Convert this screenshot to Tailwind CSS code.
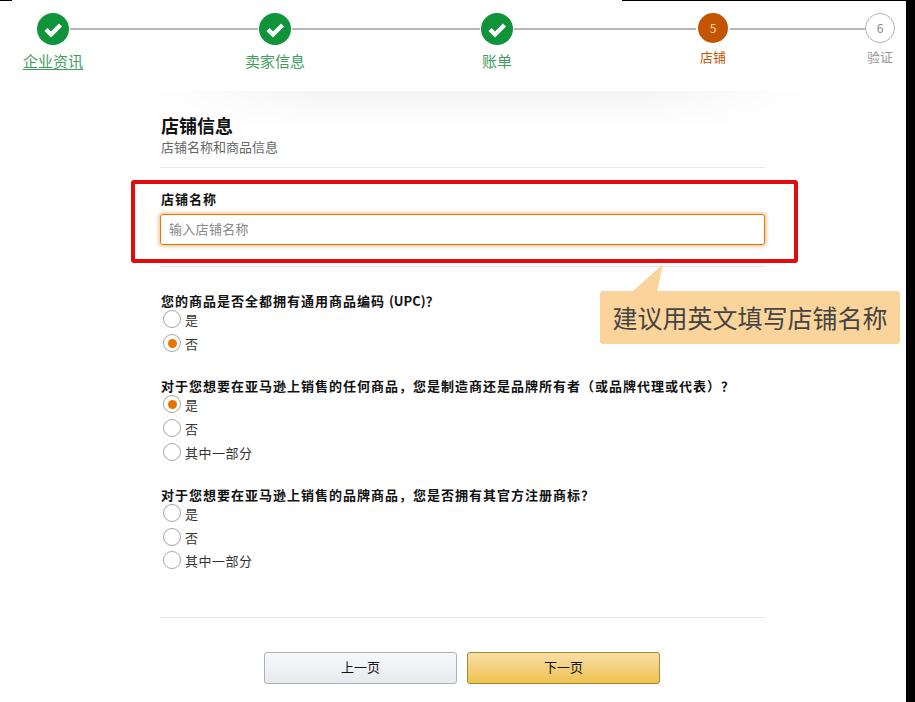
<!DOCTYPE html>
<html lang="zh">
<head>
<meta charset="utf-8">
<script src="https://cdn.jsdelivr.net/npm/@tailwindcss/browser@4"></script>
</head>
<body class="bg-black overflow-hidden">
<div class="relative w-[906px] h-[702px] bg-white overflow-hidden font-['Noto_Sans_CJK_SC','Noto_Sans',sans-serif] text-[13px] text-[#333]">
  <div class="flex h-px">
    <div class="w-[12px] bg-black"></div>
    <div class="w-[610px] bg-white"></div>
    <div class="flex-1 bg-black"></div>
  </div>

  <!-- stepper -->
  <div class="relative h-[90px] pl-[13px] pt-[11px] flex items-start">
    <div class="absolute left-[66px] top-[27px] w-[802px] h-[2px] bg-[#b8b8b8]"></div>
    <div class="relative shrink-0 w-[80px] flex flex-col items-center">
      <svg class="w-[34px] h-[34px]" viewBox="0 0 34 34"><circle cx="17" cy="17" r="17" fill="#fff"/><circle cx="17" cy="17" r="16" fill="#0f9439"/><path d="M10 17.5l5 5 9.5-9.5" fill="none" stroke="#fff" stroke-width="4.4"/></svg>
      <span class="mt-[5px] text-[15px] leading-[20px] text-[#3f9e5c] underline underline-offset-2">企业资讯</span>
    </div>
    <div class="relative shrink-0 w-[80px] ml-[142px] flex flex-col items-center">
      <svg class="w-[34px] h-[34px]" viewBox="0 0 34 34"><circle cx="17" cy="17" r="17" fill="#fff"/><circle cx="17" cy="17" r="16" fill="#0f9439"/><path d="M10 17.5l5 5 9.5-9.5" fill="none" stroke="#fff" stroke-width="4.4"/></svg>
      <span class="mt-[5px] text-[15px] leading-[20px] text-[#3f9e5c]">卖家信息</span>
    </div>
    <div class="relative shrink-0 w-[80px] ml-[142px] flex flex-col items-center">
      <svg class="w-[34px] h-[34px]" viewBox="0 0 34 34"><circle cx="17" cy="17" r="17" fill="#fff"/><circle cx="17" cy="17" r="16" fill="#0f9439"/><path d="M10 17.5l5 5 9.5-9.5" fill="none" stroke="#fff" stroke-width="4.4"/></svg>
      <span class="mt-[5px] text-[15px] leading-[20px] text-[#3f9e5c]">账单</span>
    </div>
    <div class="relative shrink-0 w-[80px] ml-[136px] flex flex-col items-center -mt-[1px]">
      <div class="w-[34px] h-[34px] rounded-full bg-[#c45500] border-2 border-white text-[#f5d9b8] text-[12px] leading-[30px] text-center">5</div>
      <span class="mt-[3px] text-[13px] leading-[18px] text-[#c45500]">店铺</span>
    </div>
    <div class="relative shrink-0 w-[80px] ml-[87px] flex flex-col items-center pt-[1px]">
      <div class="w-[30px] h-[30px] rounded-full bg-white border border-[#b4b4b4] text-[#888] text-[12px] leading-[28px] text-center">6</div>
      <span class="mt-[5px] text-[13px] leading-[18px] text-[#999]">验证</span>
    </div>
  </div>

  <div class="ml-[150px] mr-[96px] h-[36px] -mb-[36px] bg-gradient-to-b from-[#f5f5f5] to-white [mask-image:linear-gradient(to_right,transparent,black_25%,black_75%,transparent)]"></div>

  <main class="relative ml-[160px] w-[605px]">
    <section class="pt-[24px] pb-[11px] border-b border-[#e7e7e7]">
      <h1 class="text-[18px] leading-[20px] font-bold text-[#111] pl-[1px]">店铺信息</h1>
      <p class="text-[13px] leading-[18px] text-[#666] mt-[3px] pl-[1px]">店铺名称和商品信息</p>
    </section>
    <section class="pt-[22px] pb-[21px] border-b border-[#e7e7e7]">
      <label class="block text-[13px] leading-[18px] font-bold text-[#111] tracking-[1px] pl-[1px]">店铺名称</label>
      <div class="mt-[6px] h-[31px] rounded-[3px] border border-[#e77600] shadow-[0_0_3px_2px_rgba(228,121,17,0.35)] pl-[8px] text-[13px] leading-[28px] text-[#888] tracking-[0.3px]">输入店铺名称</div>
    </section>

    <section class="pt-[25px]">
      <p class="h-[17px] pl-[1px] leading-[17px] font-bold text-[#111] tracking-[1px]">您的商品是否全都拥有通用商品编码 <span class="tracking-normal">(UPC)</span>？</p>
      <div class="flex flex-col gap-[4px]">
        <div class="h-[20px] flex items-center"><span class="ml-[3px] w-[18px] h-[18px] rounded-full border border-[#a6a6a6] bg-white"></span><span class="ml-[4px] pt-[2px]">是</span></div>
        <div class="h-[20px] flex items-center"><span class="ml-[3px] w-[18px] h-[18px] rounded-full border border-[#a6a6a6] bg-white flex items-center justify-center"><span class="w-[9px] h-[9px] rounded-full bg-[#e77600]"></span></span><span class="ml-[4px] pt-[2px]">否</span></div>
      </div>
    </section>
    <section class="pt-[24px]">
      <p class="h-[17px] pl-[1px] leading-[17px] font-bold text-[#111] tracking-[1px] whitespace-nowrap">对于您想要在亚马逊上销售的任何商品，您是制造商还是品牌所有者（或品牌代理或代表）？</p>
      <div class="flex flex-col gap-[4px]">
        <div class="h-[20px] flex items-center"><span class="ml-[3px] w-[18px] h-[18px] rounded-full border border-[#a6a6a6] bg-white flex items-center justify-center"><span class="w-[9px] h-[9px] rounded-full bg-[#e77600]"></span></span><span class="ml-[4px] pt-[2px]">是</span></div>
        <div class="h-[20px] flex items-center"><span class="ml-[3px] w-[18px] h-[18px] rounded-full border border-[#a6a6a6] bg-white"></span><span class="ml-[4px] pt-[2px]">否</span></div>
        <div class="h-[20px] flex items-center"><span class="ml-[3px] w-[18px] h-[18px] rounded-full border border-[#a6a6a6] bg-white"></span><span class="ml-[4px] pt-[2px] tracking-[0.5px]">其中一部分</span></div>
      </div>
    </section>
    <section class="pt-[24px]">
      <p class="h-[17px] pl-[1px] leading-[17px] font-bold text-[#111] tracking-[1px]">对于您想要在亚马逊上销售的品牌商品，您是否拥有其官方注册商标？</p>
      <div class="flex flex-col gap-[3.5px]">
        <div class="h-[20px] flex items-center"><span class="ml-[3px] w-[18px] h-[18px] rounded-full border border-[#a6a6a6] bg-white"></span><span class="ml-[4px] pt-[2px]">是</span></div>
        <div class="h-[20px] flex items-center"><span class="ml-[3px] w-[18px] h-[18px] rounded-full border border-[#a6a6a6] bg-white"></span><span class="ml-[4px] pt-[2px]">否</span></div>
        <div class="h-[20px] flex items-center"><span class="ml-[3px] w-[18px] h-[18px] rounded-full border border-[#a6a6a6] bg-white"></span><span class="ml-[4px] pt-[2px] tracking-[0.5px]">其中一部分</span></div>
      </div>
    </section>

    <div class="mt-[47px] border-t border-[#e7e7e7] pt-[34px] flex gap-[10px] pl-[104px]">
      <button class="w-[193px] h-[32px] rounded-[3px] border border-[#adb1b8] bg-gradient-to-b from-[#f7f8fa] to-[#e7e9ec] text-[13px] leading-[28px] text-[#111] pb-[2px]">上一页</button>
      <button class="w-[193px] h-[32px] rounded-[3px] border border-[#a88734] bg-gradient-to-b from-[#f7dfa5] to-[#f0c14b] text-[13px] leading-[28px] text-[#111] pb-[2px]">下一页</button>
    </div>
  </main>

  <!-- annotations -->
  <div class="absolute left-[131px] top-[180px] w-[667px] h-[83px] border-4 border-[#e30c0c] rounded-[3px]"></div>
  <svg class="absolute left-[630px] top-[263px] w-[36px] h-[30px]" viewBox="0 0 36 30"><polygon points="2,29 33,1 27,29" fill="#fbd49b"/></svg>
  <div class="absolute left-[600px] top-[291px] w-[300px] h-[53px] rounded-[3px] bg-[#fbd49b] text-[25px] leading-[52px] text-center text-[#444]">建议用英文填写店铺名称</div>
</div>
</body>
</html>
